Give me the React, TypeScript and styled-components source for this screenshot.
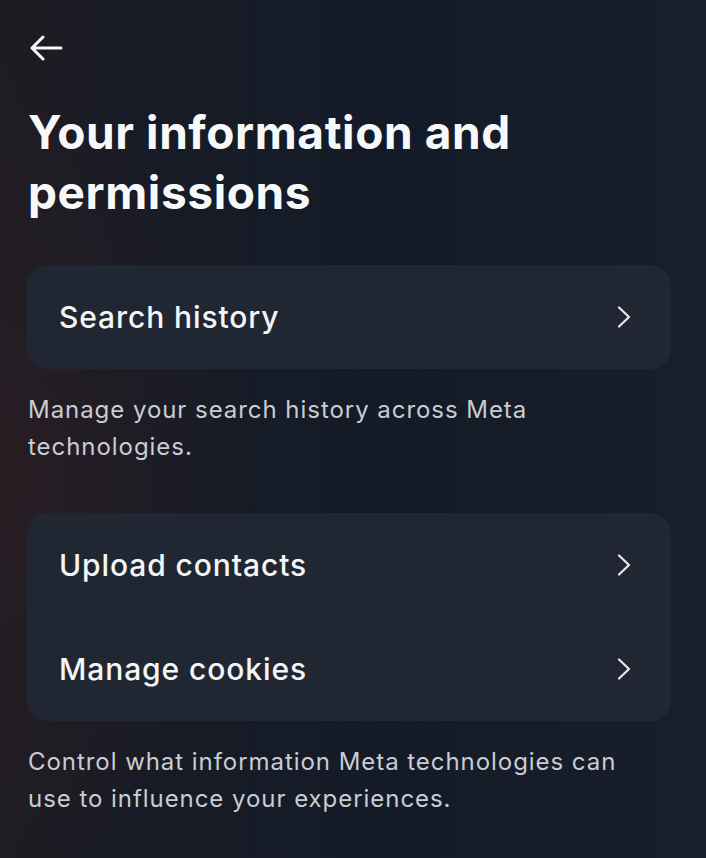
import React from "react";
import styled, { createGlobalStyle } from "styled-components";

const GlobalStyle = createGlobalStyle`
  html, body {
    margin: 0;
    padding: 0;
    background: #161c28;
  }
  body {
    font-family: Inter, "Open Sans", "Liberation Sans", sans-serif;
    -webkit-font-smoothing: antialiased;
  }
`;

const Screen = styled.div`
  width: 706px;
  height: 858px;
  box-sizing: border-box;
  padding: 34px 35px 0 27px;
  overflow: hidden;
  background:
    radial-gradient(ellipse 260px 420px at 0% 55%, rgba(42, 30, 36, 0.8), rgba(42, 30, 36, 0) 100%),
    linear-gradient(90deg, #1e1c22 0%, #171b26 22%, #141b28 55%, #171f2a 100%);
  color: #f5f6f7;
`;

const BackButton = styled.button`
  display: flex;
  align-items: center;
  height: 28px;
  padding: 0 0 0 2px;
  border: none;
  background: none;
  color: #f5f6f7;
  cursor: pointer;
`;

const Title = styled.h1`
  margin: 40px 0 43px 1px;
  font-size: 46px;
  line-height: 60px;
  font-weight: 700;
  letter-spacing: 0.6px;
  color: #f7f8f9;
`;

const Card = styled.div`
  background: #212732;
  border-radius: 20px;
  display: flex;
  flex-direction: column;
`;

const Row = styled.div`
  height: 104px;
  display: flex;
  align-items: center;
  justify-content: space-between;
  padding: 0 40px 0 32px;
  cursor: pointer;
`;

const RowLabel = styled.span`
  font-size: 30px;
  font-weight: 500;
  letter-spacing: 0.9px;
  color: #f4f5f6;
`;

const Description = styled.p<{ $gapBelow?: number }>`
  margin: 22px 0 ${p => p.$gapBelow ?? 0}px 1px;
  font-size: 24px;
  line-height: 37px;
  font-weight: 400;
  letter-spacing: 0.95px;
  color: #c9ccd2;
`;

const Chevron = () => (
  <svg width="14" height="22" viewBox="0 0 14 22" fill="none">
    <path d="M2 1.5 L12 11 L2 20.5" stroke="#e8eaed" strokeWidth="2.2" strokeLinecap="round" strokeLinejoin="round" />
  </svg>
);

const BackArrow = () => (
  <svg width="34" height="26" viewBox="0 0 34 26" fill="none">
    <path d="M32 13 H3 M14 2 L3 13 L14 24" stroke="#f5f6f7" strokeWidth="3" strokeLinecap="round" strokeLinejoin="round" />
  </svg>
);

const ListRow: React.FC<{ label: string }> = ({ label }) => (
  <Row>
    <RowLabel>{label}</RowLabel>
    <Chevron />
  </Row>
);

export default function App() {
  return (
    <>
      <GlobalStyle />
      <Screen>
        <BackButton aria-label="Back">
          <BackArrow />
        </BackButton>
        <Title>
          Your information and
          <br />
          permissions
        </Title>
        <Card>
          <ListRow label="Search history" />
        </Card>
        <Description $gapBelow={48}>
          Manage your search history across Meta
          <br />
          technologies.
        </Description>
        <Card>
          <ListRow label="Upload contacts" />
          <ListRow label="Manage cookies" />
        </Card>
        <Description>
          Control what information Meta technologies can
          <br />
          use to influence your experiences.
        </Description>
      </Screen>
    </>
  );
}
